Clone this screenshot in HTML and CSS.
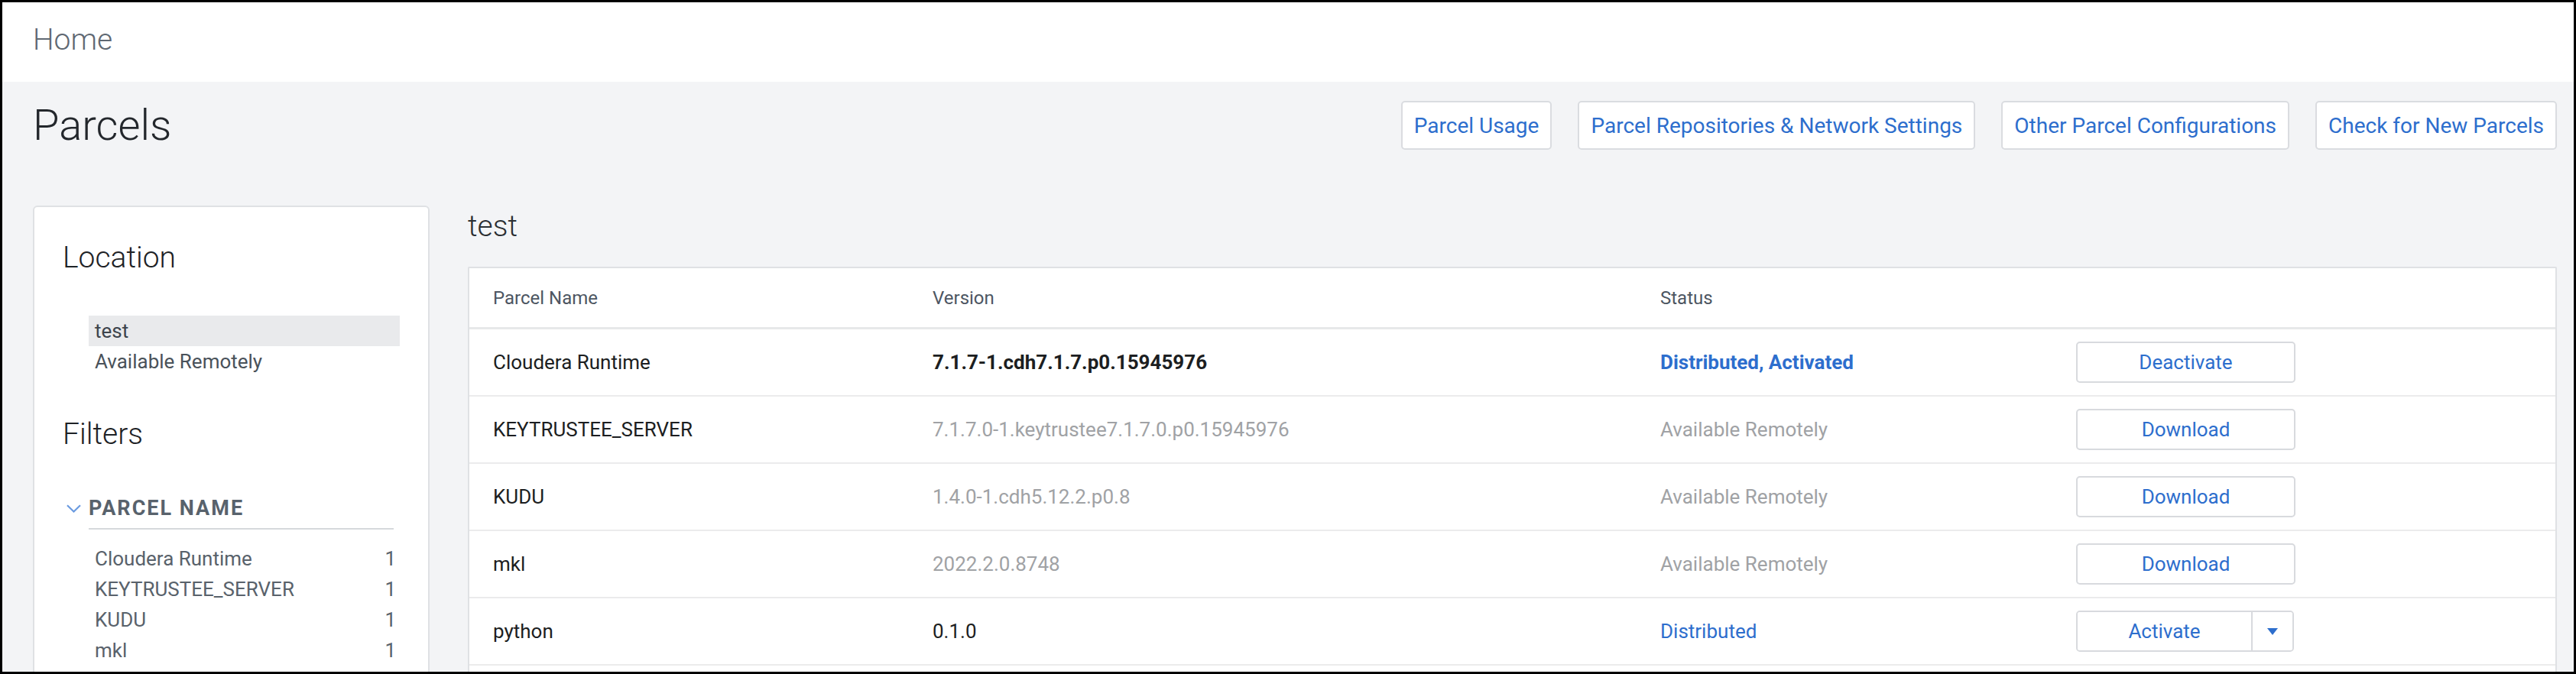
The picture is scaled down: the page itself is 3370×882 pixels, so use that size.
FILE: index.html
```html
<!DOCTYPE html>
<html lang="en">
<head>
<meta charset="utf-8">
<title>Parcels</title>
<link rel="stylesheet" href="styles.css">
</head>
<body>
<div class="frame">
  <header class="topbar"><span class="crumb">Home</span></header>
  <main class="page">
    <div class="title-row">
      <h1 class="page-title">Parcels</h1>
      <div class="actions">
        <button class="btn">Parcel Usage</button>
        <button class="btn">Parcel Repositories &amp; Network Settings</button>
        <button class="btn">Other Parcel Configurations</button>
        <button class="btn">Check for New Parcels</button>
      </div>
    </div>
    <div class="layout">
      <aside class="sidebar">
        <h2 class="side-heading">Location</h2>
        <ul class="loc-list">
          <li class="loc-item selected">test</li>
          <li class="loc-item">Available Remotely</li>
        </ul>
        <h2 class="side-heading filters">Filters</h2>
        <div class="filter-head">
          <span class="chev"><svg width="19" height="11" viewBox="0 0 19 11"><path d="M1 1.2 L9.5 9.5 L18 1.2" fill="none" stroke="#6b9be0" stroke-width="2.2"/></svg></span>
          <span class="filter-title">PARCEL NAME</span>
        </div>
        <ul class="filter-list">
          <li class="filter-item"><span>Cloudera Runtime</span><span>1</span></li>
          <li class="filter-item"><span>KEYTRUSTEE_SERVER</span><span>1</span></li>
          <li class="filter-item"><span>KUDU</span><span>1</span></li>
          <li class="filter-item"><span>mkl</span><span>1</span></li>
          <li class="filter-item"><span>python</span><span>1</span></li>
        </ul>
      </aside>
      <section class="content">
        <h2 class="section-title">test</h2>
        <div class="table">
          <div class="row head">
            <div class="cell">Parcel Name</div>
            <div class="cell">Version</div>
            <div class="cell">Status</div>
            <div class="cell"></div>
          </div>
          <div class="row">
            <div class="cell name">Cloudera Runtime</div>
            <div class="cell ver strong">7.1.7-1.cdh7.1.7.p0.15945976</div>
            <div class="cell status blue strong">Distributed, Activated</div>
            <div class="cell"><button class="act-btn">Deactivate</button></div>
          </div>
          <div class="row">
            <div class="cell name">KEYTRUSTEE_SERVER</div>
            <div class="cell ver muted">7.1.7.0-1.keytrustee7.1.7.0.p0.15945976</div>
            <div class="cell status muted">Available Remotely</div>
            <div class="cell"><button class="act-btn">Download</button></div>
          </div>
          <div class="row">
            <div class="cell name">KUDU</div>
            <div class="cell ver muted">1.4.0-1.cdh5.12.2.p0.8</div>
            <div class="cell status muted">Available Remotely</div>
            <div class="cell"><button class="act-btn">Download</button></div>
          </div>
          <div class="row">
            <div class="cell name">mkl</div>
            <div class="cell ver muted">2022.2.0.8748</div>
            <div class="cell status muted">Available Remotely</div>
            <div class="cell"><button class="act-btn">Download</button></div>
          </div>
          <div class="row">
            <div class="cell name">python</div>
            <div class="cell ver">0.1.0</div>
            <div class="cell status blue">Distributed</div>
            <div class="cell">
              <div class="split">
                <button class="split-main">Activate</button>
                <button class="split-caret" aria-label="More actions"><span class="caret"></span></button>
              </div>
            </div>
          </div>
          <div class="row">
            <div class="cell name">&nbsp;</div>
            <div class="cell"></div>
            <div class="cell"></div>
            <div class="cell"></div>
          </div>
        </div>
      </section>
    </div>
  </main>
</div>
</body>
</html>
```

FILE: styles.css
```css
html, body {
  margin: 0;
  padding: 0;
  overflow: hidden;
  background: #000;
}
* { box-sizing: border-box; }

.frame {
  width: 3370px;
  height: 882px;
  border: 3px solid #000;
  background: #f3f4f6;
  overflow: hidden;
  font-family: Roboto, "Liberation Sans", sans-serif;
  color: #1f2226;
}

.topbar {
  height: 104px;
  background: #fff;
  padding: 26px 0 0 40px;
}
.crumb {
  font-size: 39px;
  font-weight: 300;
  line-height: 46px;
  color: #5f6872;
}

.page {
  padding: 0 22px 0 40px;
}

.title-row {
  display: flex;
  justify-content: space-between;
  align-items: center;
  padding-top: 25px;
}
.page-title {
  margin: 0;
  font-size: 56px;
  font-weight: 300;
  line-height: 64px;
  color: #23272c;
}
.actions {
  display: flex;
  gap: 34px;
}
.btn {
  height: 64px;
  padding: 0 15px;
  border: 2px solid #dadce0;
  border-radius: 5px;
  background: #fff;
  font-family: Roboto, "Liberation Sans", sans-serif;
  font-size: 28px;
  color: #2d6ecd;
}

.layout {
  display: flex;
  gap: 50px;
  margin-top: 73px;
}

.sidebar {
  flex: 0 0 519px;
  height: 700px;
  background: #fff;
  border: 2px solid #dfe1e4;
  border-radius: 6px;
  padding: 43px 37px 0 37px;
}
.side-heading {
  margin: 0;
  font-size: 39px;
  font-weight: 300;
  line-height: 46px;
  color: #1e2226;
}
.side-heading.filters {
  margin-top: 52px;
}
.loc-list {
  list-style: none;
  margin: 53px 0 0 34px;
  padding: 0;
}
.loc-item {
  height: 40px;
  line-height: 40px;
  padding-left: 8px;
  font-size: 26px;
  color: #4a525a;
}
.loc-item.selected {
  background: #e9eaec;
  color: #3d444c;
}

.filter-head {
  display: flex;
  margin-top: 56px;
}
.chev {
  flex: 0 0 34px;
  height: 36px;
  display: flex;
  align-items: center;
  padding-left: 5px;
}
.chev svg { display: block; }
.filter-title {
  flex: 1;
  margin-right: 8px;
  font-size: 27px;
  font-weight: 700;
  letter-spacing: 2px;
  line-height: 36px;
  padding-bottom: 8px;
  border-bottom: 2px solid #d6d9dc;
  color: #58626c;
}
.filter-list {
  list-style: none;
  margin: 18px 5px 0 34px;
  padding: 0;
}
.filter-item {
  display: flex;
  justify-content: space-between;
  height: 40px;
  line-height: 40px;
  padding-left: 8px;
  font-size: 26px;
  color: #59626b;
}

.content {
  flex: 1;
  min-width: 0;
}
.section-title {
  margin: 4px 0 0 0;
  font-size: 39px;
  font-weight: 300;
  line-height: 46px;
  color: #2b2f33;
}
.table {
  margin-top: 30px;
  background: #fff;
  border: 2px solid #dfe1e4;
  border-bottom: none;
  border-radius: 2px 2px 0 0;
}
.row {
  display: grid;
  grid-template-columns: 575px 952px 544px 1fr;
  height: 88px;
  border-bottom: 2px solid #ebebec;
  font-size: 26px;
}
.row.head {
  height: 80px;
  border-bottom: 3px solid #e7e8e9;
  font-size: 24px;
  color: #4d5662;
}
.cell {
  display: flex;
  align-items: center;
  padding-left: 31px;
  white-space: nowrap;
}
.name { color: #1c1e21; }
.ver { color: #1c1e21; }
.strong { font-weight: 700; }
.muted { color: #a0a2a5; }
.blue { color: #2d6ecd; }

.act-btn {
  width: 287px;
  height: 54px;
  border: 2px solid #d8dade;
  border-radius: 5px;
  background: #fff;
  font-family: Roboto, "Liberation Sans", sans-serif;
  font-size: 26px;
  color: #2d6ecd;
}
.split {
  display: flex;
  width: 285px;
  height: 54px;
  border: 2px solid #d8dade;
  border-radius: 5px;
  background: #fff;
  overflow: hidden;
}
.split-main {
  flex: 1;
  border: none;
  background: #fff;
  font-family: Roboto, "Liberation Sans", sans-serif;
  font-size: 26px;
  color: #2d6ecd;
}
.split-caret {
  flex: 0 0 54px;
  border: none;
  border-left: 2px solid #d8dade;
  background: #fff;
  display: flex;
  align-items: center;
  justify-content: center;
  padding: 0;
}
.caret {
  width: 0;
  height: 0;
  border-left: 7px solid transparent;
  border-right: 7px solid transparent;
  border-top: 9px solid #2d6ecd;
}
```
